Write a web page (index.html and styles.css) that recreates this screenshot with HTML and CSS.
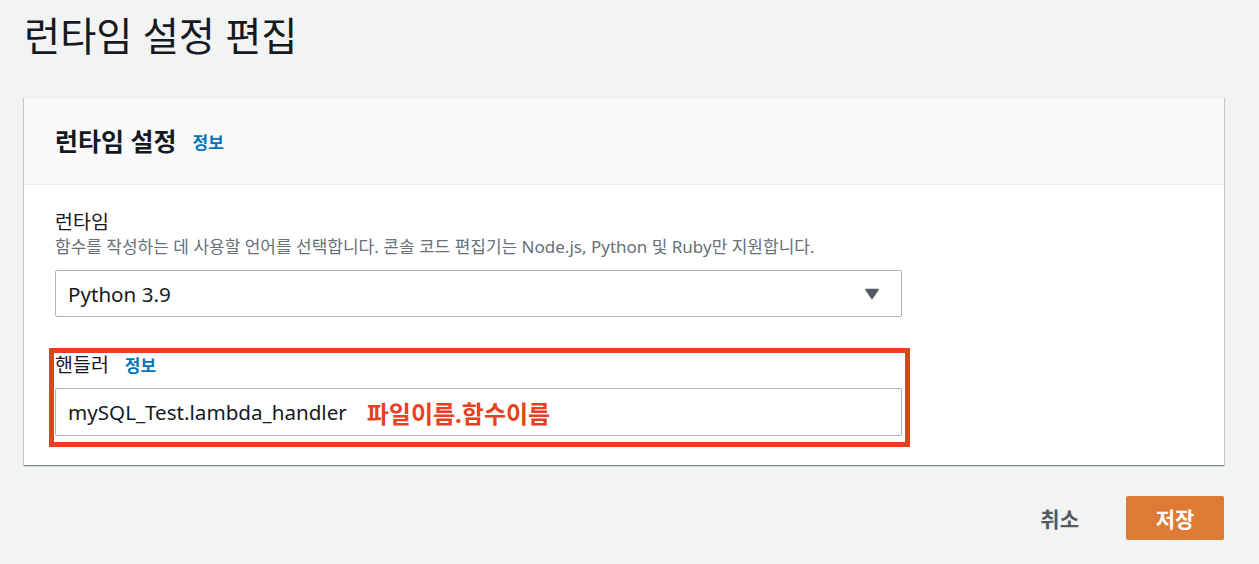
FILE: index.html
```html
<!DOCTYPE html>
<html lang="ko">
<head>
<meta charset="utf-8">
<title>런타임 설정 편집</title>
<link rel="stylesheet" href="styles.css">
</head>
<body>
<div class="page">
  <h1 class="title">런타임 설정 편집</h1>
  <div class="card">
    <div class="card-header">
      <h2 class="card-title">런타임 설정</h2>
      <a class="info">정보</a>
    </div>
    <div class="card-body">
      <div class="field">
        <div class="label">런타임</div>
        <div class="desc">함수를 작성하는 데 사용할 언어를 선택합니다. 콘솔 코드 편집기는 Node.js, Python 및 Ruby만 지원합니다.</div>
        <div class="select">
          <span class="value">Python 3.9</span>
          <svg class="caret" width="14" height="12" viewBox="0 0 14 12"><path d="M1 1.5 H13 L7 10.5 Z" fill="#545b64" stroke="#545b64" stroke-width="1.5" stroke-linejoin="round"/></svg>
        </div>
      </div>
      <div class="field handler annot">
        <div class="label-row">
          <span class="label">핸들러</span>
          <a class="info">정보</a>
        </div>
        <div class="input">
          <span class="value">mySQL_Test.lambda_handler</span>
          <span class="note">파일이름.함수이름</span>
        </div>
      </div>
    </div>
  </div>
  <div class="actions">
    <button class="btn-link">취소</button>
    <button class="btn-primary">저장</button>
  </div>
</div>
</body>
</html>
```

FILE: styles.css
```css
* { box-sizing: border-box; }
body {
  margin: 0;
  background: #f2f3f3;
  font-family: "Noto Sans", "Noto Sans CJK KR", sans-serif;
  color: #16191f;
}
.page {
  padding: 11px 35px 0 24px;
}
.title {
  margin: 0;
  font-size: 39.3px;
  font-weight: 400;
  line-height: 50px;
  color: #16191f;
}
.card {
  margin-top: 36px;
  background: #fff;
  box-shadow: 0 1px 1px 0 rgba(0,28,36,.3), 1px 1px 1px 0 rgba(0,28,36,.15), -1px 1px 1px 0 rgba(0,28,36,.15);
  border-top: 1px solid #eaeded;
}
.card-header {
  height: 87px;
  background: #fafafa;
  border-bottom: 1px solid #eaeded;
  display: flex;
  align-items: center;
  padding: 0 31px;
  gap: 16px;
}
.card-title {
  margin: 0;
  font-size: 25px;
  font-weight: 700;
  line-height: 32px;
}
.info {
  color: #0073bb;
  font-weight: 700;
  font-size: 17px;
  line-height: 22px;
  padding-top: 4px;
}
.card-body {
  padding: 24px 31px 29px;
  width: 847px;
  box-sizing: content-box;
}
.label {
  font-size: 19.5px;
  line-height: 26px;
}
.desc {
  font-size: 17px;
  line-height: 24px;
  color: #687078;
}
.select, .input {
  height: 47px;
  border: 1px solid #aab7b8;
  border-radius: 2px;
  display: flex;
  align-items: center;
  padding: 0 22px 0 12px;
  font-size: 20.6px;
  background: #fff;
}
.select {
  margin-top: 11px;
  justify-content: space-between;
}
.handler {
  margin-top: 35px;
}
.label-row {
  display: flex;
  align-items: center;
  gap: 16px;
}
.label-row .info {
  padding-top: 2px;
}
.input {
  margin-top: 10px;
  height: 48px;
}
.note {
  margin-left: 20px;
  color: #e8401e;
  font-weight: 700;
  font-size: 24px;
}
.annot {
  position: relative;
}
.annot::after {
  content: "";
  position: absolute;
  left: -6px;
  right: -8px;
  top: -4px;
  bottom: -11px;
  border: 5px solid #e8401e;
  pointer-events: none;
}
.actions {
  display: flex;
  justify-content: flex-end;
  align-items: center;
  margin-top: 31px;
  gap: 27px;
}
.btn-link, .btn-primary {
  font-family: inherit;
  font-size: 21px;
  font-weight: 700;
  border: none;
  border-radius: 2px;
  height: 44px;
  cursor: pointer;
}
.btn-link {
  background: transparent;
  color: #545b64;
  padding: 0 20px;
}
.btn-primary {
  background: #df7a34;
  color: #fff;
  width: 98px;
}
```
